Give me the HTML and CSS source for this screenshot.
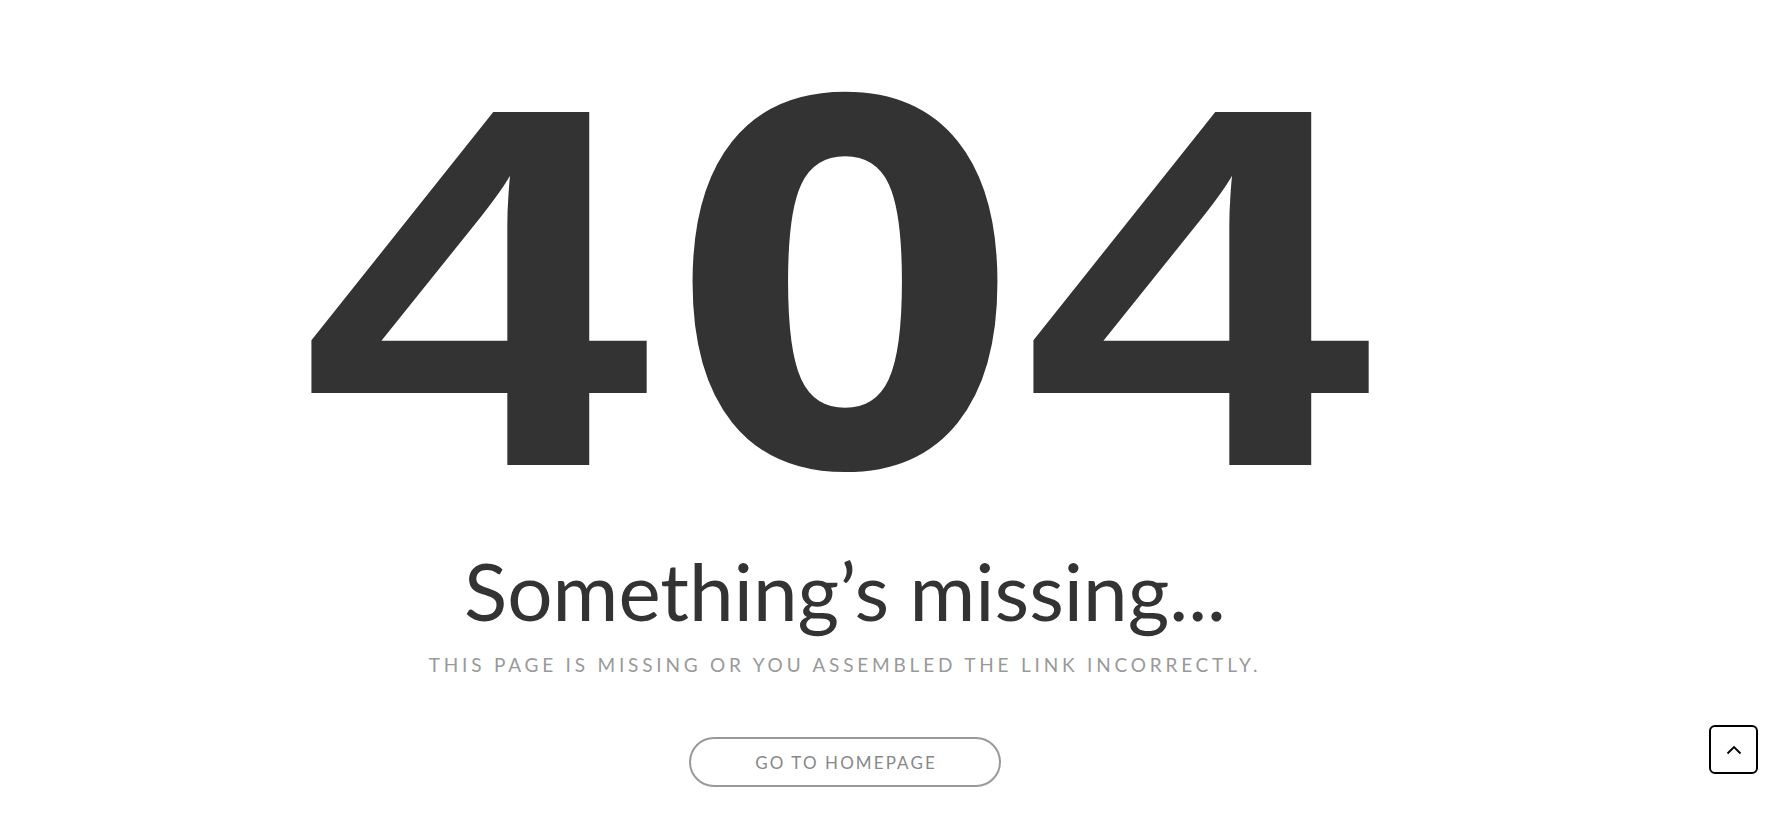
FILE: index.html
```html
<!DOCTYPE html>
<html lang="en">
<head>
<meta charset="utf-8">
<title>404</title>
<link rel="stylesheet" href="styles.css">
</head>
<body>
<main class="page">
  <h1 class="code"><span class="digit">4</span><span class="digit digit-zero">0</span><span class="digit">4</span></h1>
  <h2 class="title">Something’s missing...</h2>
  <p class="subtitle">This page is missing or you assembled the link incorrectly.</p>
  <a class="home-btn" href="#">Go to homepage</a>
</main>
<a class="to-top" href="#" aria-label="Back to top">
  <svg width="16" height="10" viewBox="0 0 16 10"><path d="M1.5 8.5 L8 2 L14.5 8.5" fill="none" stroke="#000" stroke-width="1.8"/></svg>
</a>
</body>
</html>
```
FILE: styles.css
```css
html, body {
  margin: 0;
  padding: 0;
  background: #fff;
}
body {
  font-family: "Lato", "Liberation Sans", sans-serif;
  color: #333;
  min-height: 833px;
}
.page {
  display: flex;
  flex-direction: column;
  align-items: center;
  padding-top: 31px;
  padding-right: 98px;
}
.code {
  margin: 0 16px 0 0;
  display: flex;
  align-items: baseline;
  font-weight: 700;
  line-height: 1;
  color: #333;
}
.digit {
  display: block;
  width: 350px;
  text-align: center;
  font-family: "Liberation Sans", "Arial", sans-serif;
  font-size: 513px;
  transform: scaleX(1.22);
}
.digit-zero {
  margin: 0 3px 0 19px;
  font-family: "DejaVu Sans", sans-serif;
  font-size: 503px;
  transform: scaleX(1.01);
}
.title {
  margin: 2px 0 0;
  font-family: "Lato", sans-serif;
  font-weight: 400;
  font-size: 80px;
  line-height: 1.1;
  color: #333;
}
.subtitle {
  margin: 19px 0 0;
  font-size: 19px;
  letter-spacing: 3.8px;
  text-transform: uppercase;
  color: #999;
}
.home-btn {
  margin-top: 61px;
  width: 312px;
  height: 50px;
  box-sizing: border-box;
  border: 2px solid #999;
  border-radius: 25px;
  display: flex;
  align-items: center;
  justify-content: center;
  padding-left: 2px;
  text-decoration: none;
  text-transform: uppercase;
  font-size: 17px;
  letter-spacing: 2.1px;
  color: #888;
}
.to-top {
  position: fixed;
  left: 1709px;
  top: 725px;
  width: 49px;
  height: 49px;
  box-sizing: border-box;
  border: 2px solid #000;
  border-radius: 6px;
  display: flex;
  align-items: center;
  justify-content: center;
  background: #fff;
}
```
